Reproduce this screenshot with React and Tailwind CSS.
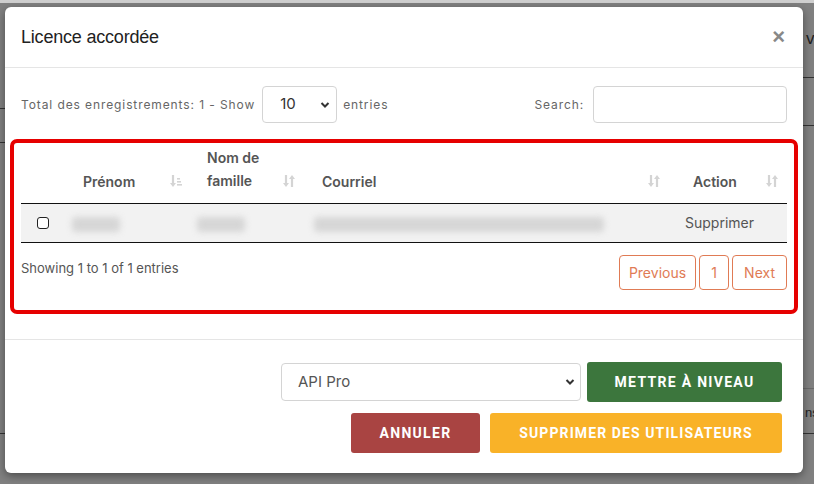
import React from 'react';

const SortIcon = ({ active = false }) => (
  <svg width="14" height="16" viewBox="0 0 14 16" className="inline-block">
    {/* down arrow */}
    <path d="M4 2v10" stroke="#d4d4d4" strokeWidth="2.2" fill="none" />
    <path d="M1 10l3 4 3-4z" fill="#d4d4d4" />
    {active ? (
      <g fill="#d4d4d4">
        <rect x="8" y="5" width="3" height="1.6" />
        <rect x="8" y="8" width="4" height="1.6" />
        <rect x="8" y="11" width="5" height="1.6" />
      </g>
    ) : (
      <>
        <path d="M10 4v10" stroke="#d4d4d4" strokeWidth="2.2" fill="none" />
        <path d="M7 6l3-4 3 4z" fill="#d4d4d4" />
      </>
    )}
  </svg>
);

const Blur = ({ w }) => (
  <span
    className="inline-block h-[15px] rounded bg-[#d6d6d6] blur-[3px] align-middle"
    style={{ width: w }}
  />
);

export default function App() {
  return (
    <div className="relative w-[814px] h-[484px] overflow-hidden bg-[#808080] font-['Inter',sans-serif]">
      {/* page behind the overlay */}
      <div className="absolute inset-x-0 top-0 h-[3px] bg-[#cfcfcf]" />
      <div className="absolute left-[806px] top-[26px] text-[17px] text-[#222] font-['Liberation_Sans',sans-serif]">ve</div>
      <div className="absolute left-[803px] right-0 top-[77px] h-px bg-[#333]" />
      <div className="absolute left-[803px] right-0 top-[125px] h-px bg-[#333]" />
      <div className="absolute left-[803px] right-0 top-[388px] h-px bg-[#6a6a6a]" />
      <div className="absolute left-[805px] top-[403px] text-[13px] text-[#222] font-['Liberation_Sans',sans-serif]">ns</div>
      <div className="absolute left-[803px] right-0 top-[433px] h-px bg-[#333]" />
      <div className="absolute left-0 w-[5px] top-[108px] h-px bg-[#333]" />
      <div className="absolute left-0 w-[5px] top-[142px] h-px bg-[#333]" />
      <div className="absolute left-0 w-[5px] top-[433px] h-px bg-[#333]" />

      {/* modal */}
      <div className="absolute left-[5px] top-[7px] w-[798px] h-[466px] bg-white rounded-[6px] shadow-[0_3px_9px_rgba(0,0,0,0.4)] flex flex-col">
        <div className="h-[61px] flex items-center justify-between px-[16px] border-b border-[#e5e5e5]">
          <h4 className="text-[18px] text-[#222] font-['Liberation_Sans',sans-serif] tracking-[-0.2px]">Licence accordée</h4>
          <span className="text-[22px] font-bold text-[#888] leading-none mr-[2px] font-['Liberation_Sans',sans-serif]">×</span>
        </div>

        <div className="px-[5px] pt-[16px] h-[272px] border-b border-[#e5e5e5]">
          <div className="flex items-center justify-between px-[11px] text-[12px] text-[#666] tracking-[0.9px]">
            <div className="flex items-center pt-[2px]">
              <span>Total des enregistrements: 1 - Show</span>
              <div className="ml-[7px] w-[75px] h-[37px] border border-[#d4d4d4] rounded-[4px] flex items-center justify-between pl-[17px] pr-[6px] text-[15px] text-[#333] tracking-normal">
                <span>10</span>
                <svg width="10" height="8" viewBox="0 0 10 8"><path d="M1.5 2l3.5 3.5L8.5 2" stroke="#333" strokeWidth="2" fill="none" /></svg>
              </div>
              <span className="ml-[6px]">entries</span>
            </div>
            <div className="flex items-center pt-[2px]">
              <span>Search:</span>
              <div className="ml-[9px] w-[194px] h-[37px] border border-[#d4d4d4] rounded-[4px]" />
            </div>
          </div>

          <div className="mt-[16px] h-[175px] border-[4px] border-[#e60000] rounded-[7px] px-[7px]">
            <table className="w-[766px] border-collapse text-[14px]">
              <thead>
                <tr className="h-[60px] border-b border-[#111]">
                  <th className="w-[40px]" />
                  <th className="w-[130px] align-bottom text-left font-semibold text-[#555] pl-[22px] pb-[11px]">
                    <div className="flex items-center justify-between pr-[8px]"><span>Prénom</span><SortIcon active /></div>
                  </th>
                  <th className="w-[115px] align-bottom text-left font-semibold text-[#555] pl-[16px] pb-[11px]">
                    <div className="flex items-end justify-between pr-[10px]"><span className="leading-[23px]">Nom de<br />famille</span><span className="mb-[2px]"><SortIcon /></span></div>
                  </th>
                  <th className="w-[365px] align-bottom text-left font-semibold text-[#555] pl-[16px] pb-[11px]">
                    <div className="flex items-center justify-between pr-[10px]"><span>Courriel</span><SortIcon /></div>
                  </th>
                  <th className="align-bottom text-left font-semibold text-[#555] pl-[22px] pb-[11px]">
                    <div className="flex items-center justify-between pr-[8px]"><span>Action</span><SortIcon /></div>
                  </th>
                </tr>
              </thead>
              <tbody>
                <tr className="h-[39px] bg-[#f2f2f2] border-b border-[#111]">
                  <td className="pl-[16px]">
                    <span className="block w-[12px] h-[12px] border border-[#222] rounded-[3px] bg-white" />
                  </td>
                  <td className="pl-[11px]"><Blur w={48} /></td>
                  <td className="pl-[6px]"><Blur w={48} /></td>
                  <td className="pl-[8px]"><Blur w={290} /></td>
                  <td className="pl-[14px] text-[#555]">Supprimer</td>
                </tr>
              </tbody>
            </table>
            <div className="flex items-start justify-between mt-[12px] text-[13px] text-[#555]">
              <span className="pt-[4px]">Showing 1 to 1 of 1 entries</span>
              <div className="flex gap-[3px] text-[14px] text-[#e07b55]">
                <span className="h-[35px] px-[9px] flex items-center border border-[#e07b55] rounded-[4px]">Previous</span>
                <span className="h-[35px] w-[30px] justify-center flex items-center border border-[#e07b55] rounded-[4px]">1</span>
                <span className="h-[35px] px-[11px] flex items-center border border-[#e07b55] rounded-[4px]">Next</span>
              </div>
            </div>
          </div>
        </div>

        <div className="flex flex-col items-end gap-[11px] pr-[21px] pt-[22px] font-['Roboto',sans-serif]">
          <div className="flex items-center gap-[6px]">
            <div className="w-[300px] h-[38px] border border-[#d4d4d4] rounded-[4px] flex items-center justify-between pl-[16px] pr-[5px] text-[15px] text-[#555] font-['Inter',sans-serif]">
              <span>API Pro</span>
              <svg width="10" height="8" viewBox="0 0 10 8"><path d="M1.5 2l3.5 3.5L8.5 2" stroke="#333" strokeWidth="2" fill="none" /></svg>
            </div>
            <button className="w-[195px] h-[40px] bg-[#3c763d] text-white text-[14px] font-bold tracking-[1.3px] rounded-[3px]">METTRE À NIVEAU</button>
          </div>
          <div className="flex items-center gap-[10px]">
            <button className="w-[129px] h-[40px] bg-[#a94442] text-white text-[14px] font-bold tracking-[1.3px] rounded-[3px]">ANNULER</button>
            <button className="w-[292px] h-[40px] bg-[#f9b228] text-white text-[14px] font-bold tracking-[1.1px] rounded-[3px]">SUPPRIMER DES UTILISATEURS</button>
          </div>
        </div>
      </div>
    </div>
  );
}
